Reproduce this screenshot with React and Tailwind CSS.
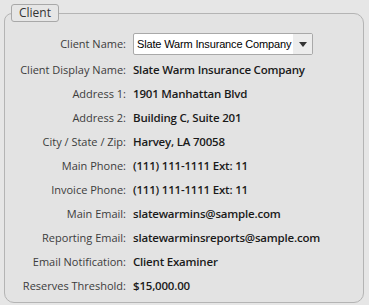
import React from "react";

const rows = [
  ["Client Display Name:", "Slate Warm Insurance Company"],
  ["Address 1:", "1901 Manhattan Blvd"],
  ["Address 2:", "Building C, Suite 201"],
  ["City / State / Zip:", "Harvey, LA 70058"],
  ["Main Phone:", "(111) 111-1111 Ext: 11"],
  ["Invoice Phone:", "(111) 111-1111 Ext: 11"],
  ["Main Email:", "slatewarmins@sample.com"],
  ["Reporting Email:", "slatewarminsreports@sample.com"],
  ["Email Notification:", "Client Examiner"],
  ["Reserves Threshold:", "$15,000.00"],
];

const Row = ({ label, children, tall }) => (
  <div className={`flex items-center ${tall ? "h-[28px]" : "h-[24px]"}`}>
    <div className="w-[121px] text-right text-[11px] text-[#3c3c3c] whitespace-nowrap">
      {label}
    </div>
    <div className="ml-[7px] flex items-center">{children}</div>
  </div>
);

const App = () => {
  return (
    <div
      className="w-[369px] h-[305px] bg-[#e6e6e6] pl-[4px] pt-[4px]"
      style={{ fontFamily: '"Open Sans", "Noto Sans", sans-serif' }}
    >
      <fieldset className="w-[360px] h-[299px] border border-[#b4b4b4] rounded-tl-[8px] rounded-tr-[10px] rounded-b-[10px] bg-[#e3e3e3]">
        <legend className="ml-[6px] px-[7px] h-[18px] leading-[16px] border border-[#a8a8a8] rounded-[3px] bg-[#e6e6e6] text-[12px] text-[#333]">
          Client
        </legend>

        <div className="pt-[8px] flex flex-col">
          <Row label="Client Name:" tall>
            <div className="w-[180px] h-[22px] flex items-center bg-white border border-[#a9a9a9] rounded-[2px] overflow-hidden">
              <span
                className="flex-1 min-w-0 pl-[3px] text-[11px] tracking-[-0.15px] text-black whitespace-nowrap overflow-hidden"
                style={{ fontFamily: '"Liberation Sans", Arial, sans-serif' }}
              >
                Slate Warm Insurance Company
              </span>
              <span className="flex-none w-[19px] h-full flex items-center justify-center bg-[#ececec]">
                <svg width="8" height="5" viewBox="0 0 8 5">
                  <path d="M0 0 L8 0 L4 5 Z" fill="#333" />
                </svg>
              </span>
            </div>
          </Row>

          {rows.map(([label, value]) => (
            <Row key={label} label={label}>
              <span className="text-[11.5px] tracking-[-0.2px] font-semibold text-[#1a1a1a] whitespace-nowrap">
                {value}
              </span>
            </Row>
          ))}
        </div>
      </fieldset>
    </div>
  );
};

export default App;
